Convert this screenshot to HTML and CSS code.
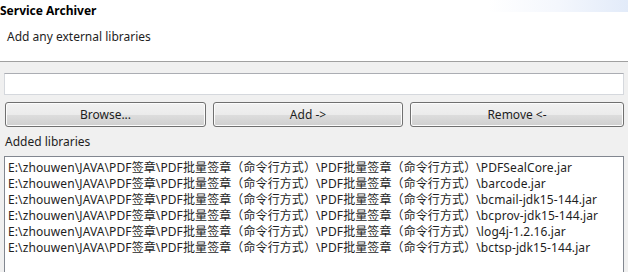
FILE: index.html
```html
<!DOCTYPE html>
<html lang="en">
<head>
    <meta charset="UTF-8">
    <title>Service Archiver</title>
    <link rel="stylesheet" href="styles.css">
</head>
<body>
    <div class="header">
        <div class="title">Service Archiver</div>
        <div class="subtitle">Add any external libraries</div>
    </div>
    <div class="content">
        <input type="text" class="path-input">
        <div class="buttons">
            <button class="btn">Browse...</button>
            <button class="btn">Add -&gt;</button>
            <button class="btn">Remove &lt;-</button>
        </div>
        <div class="list-label">Added libraries</div>
        <div class="list">
            <div class="row">E:\zhouwen\JAVA\PDF签章\PDF批量签章（命令行方式）\PDF批量签章（命令行方式）\PDFSealCore.jar</div>
            <div class="row">E:\zhouwen\JAVA\PDF签章\PDF批量签章（命令行方式）\PDF批量签章（命令行方式）\barcode.jar</div>
            <div class="row">E:\zhouwen\JAVA\PDF签章\PDF批量签章（命令行方式）\PDF批量签章（命令行方式）\bcmail-jdk15-144.jar</div>
            <div class="row">E:\zhouwen\JAVA\PDF签章\PDF批量签章（命令行方式）\PDF批量签章（命令行方式）\bcprov-jdk15-144.jar</div>
            <div class="row">E:\zhouwen\JAVA\PDF签章\PDF批量签章（命令行方式）\PDF批量签章（命令行方式）\log4j-1.2.16.jar</div>
            <div class="row">E:\zhouwen\JAVA\PDF签章\PDF批量签章（命令行方式）\PDF批量签章（命令行方式）\bctsp-jdk15-144.jar</div>
        </div>
    </div>
</body>
</html>
```

FILE: styles.css
```css
html, body {
    margin: 0;
    height: 100%;
    overflow: hidden;
}

body {
    background: #f0f0f0;
    font-family: "Noto Sans", "Noto Sans CJK SC", sans-serif;
    font-size: 12px;
    color: #1e1e1e;
}

/* Wizard banner, with the faint blue strip top right */
.header {
    height: 62px;
    box-sizing: border-box;
    background-color: #fff;
    background-image: linear-gradient(to left, #e2ebf9 0px, #f4f7fd 70px, #ffffff 140px);
    background-size: 100% 12px;
    background-repeat: no-repeat;
    border-bottom: 1px solid #a0a0a0;
}

.title {
    font-weight: bold;
    padding-top: 2px;
    color: #000;
}

.subtitle {
    padding: 9px 0 0 7px;
}

.content {
    padding: 0 4px;
}

.path-input {
    display: block;
    width: 100%;
    box-sizing: border-box;
    height: 22px;
    margin: 11px 0 0 0;
    border: 1px solid #d5d8dd;
    border-top-color: #abadb3;
    background: #fff;
}

.buttons {
    display: grid;
    grid-template-columns: 201px 190px 1fr;
    gap: 7px;
    margin-top: 7px;
    padding-left: 1px;
}

.btn {
    height: 25px;
    font-family: inherit;
    font-size: 12px;
    color: #1e1e1e;
    border: 1px solid #707070;
    border-radius: 3px;
    background: linear-gradient(#f2f2f2 0%, #ebebeb 50%, #dddddd 51%, #cfcfcf 100%);
    box-shadow: inset 0 0 0 1px #fcfcfc;
}

.list-label {
    margin: 7px 0 0 1px;
    line-height: 16px;
}

.list {
    margin-top: 6px;
    background: #fff;
    border: 1px solid #828790;
    border-bottom: none;
    height: 112px;
    padding: 3px 0 0 3px;
}

.row {
    line-height: 16px;
    white-space: nowrap;
    letter-spacing: 0.1px;
}
```
